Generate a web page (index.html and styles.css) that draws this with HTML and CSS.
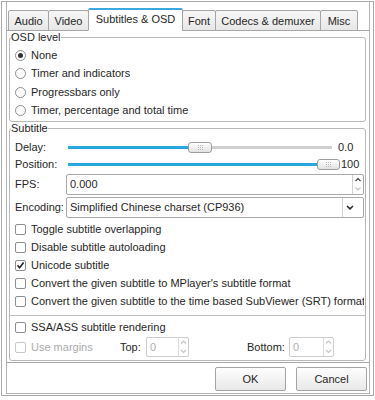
FILE: index.html
```html
<!DOCTYPE html>
<html>
<head>
<meta charset="utf-8">
<link rel="stylesheet" href="styles.css">
</head>
<body>
<div class="win">
  <div class="frame">
    <div class="tabs">
      <div class="tab w-audio">Audio</div>
      <div class="tab w-video">Video</div>
      <div class="tab sel w-sub">Subtitles &amp; OSD</div>
      <div class="tab w-font">Font</div>
      <div class="tab w-codec">Codecs &amp; demuxer</div>
      <div class="tab w-misc">Misc</div>
    </div>
    <div class="pane">
      <fieldset class="group osd">
        <legend>OSD level</legend>
        <div class="rows">
          <div class="opt"><span class="radio on"></span>None</div>
          <div class="opt"><span class="radio"></span>Timer and indicators</div>
          <div class="opt"><span class="radio"></span>Progressbars only</div>
          <div class="opt"><span class="radio"></span>Timer, percentage and total time</div>
        </div>
      </fieldset>
      <fieldset class="group sub">
        <legend>Subtitle</legend>
        <div class="subbody">
          <div class="srow delay">
            <span class="lbl">Delay:</span>
            <div class="slider"><span class="fill"></span><span class="handle"><svg width="5" height="5" viewBox="0 0 5 5"><path fill="#b8b8b8" d="M0 0h1v1H0zM2 0h1v1H2zM4 0h1v1H4zM0 2h1v1H0zM2 2h1v1H2zM4 2h1v1H4zM0 4h1v1H0zM2 4h1v1H2zM4 4h1v1H4z"/></svg></span><span class="rest"></span></div>
            <span class="val">0.0</span>
          </div>
          <div class="srow pos">
            <span class="lbl">Position:</span>
            <div class="slider"><span class="fill"></span><span class="handle"><svg width="5" height="5" viewBox="0 0 5 5"><path fill="#b8b8b8" d="M0 0h1v1H0zM2 0h1v1H2zM4 0h1v1H4zM0 2h1v1H0zM2 2h1v1H2zM4 2h1v1H4zM0 4h1v1H0zM2 4h1v1H2zM4 4h1v1H4z"/></svg></span><span class="rest"></span></div>
            <span class="val">100</span>
          </div>
          <div class="field fps">
            <span class="lbl">FPS:</span>
            <div class="box">
              <span class="txt">0.000</span>
              <span class="spin"><svg width="10" height="19" viewBox="0 0 10 19"><path d="M2.5 6 L5 3.5 L7.5 6" fill="none" stroke="#3a3a3a" stroke-width="1.1"/><path d="M2.5 12.5 L5 15 L7.5 12.5" fill="none" stroke="#c2c2c2" stroke-width="1.1"/></svg></span>
            </div>
          </div>
          <div class="field enc">
            <span class="lbl">Encoding:</span>
            <div class="box">
              <span class="txt">Simplified Chinese charset (CP936)</span>
              <span class="drop"><svg width="20" height="19" viewBox="0 0 20 19"><path d="M4 8 L7 10.8 L10 8" fill="none" stroke="#2a2a2a" stroke-width="1.6"/></svg></span>
            </div>
          </div>
          <div class="checks">
            <div class="chk"><span class="cb"></span>Toggle subtitle overlapping</div>
            <div class="chk"><span class="cb"></span>Disable subtitle autoloading</div>
            <div class="chk"><span class="cb"><svg width="9" height="9" viewBox="0 0 9 9"><path d="M1.5 4.3 L3.6 6.8 L7.6 1.4" fill="none" stroke="#222" stroke-width="1.6"/></svg></span>Unicode subtitle</div>
            <div class="chk"><span class="cb"></span>Convert the given subtitle to MPlayer's subtitle format</div>
            <div class="chk"><span class="cb"></span>Convert the given subtitle to the time based SubViewer (SRT) format</div>
          </div>
          <div class="sep"></div>
          <div class="chk ssa"><span class="cb"></span>SSA/ASS subtitle rendering</div>
          <div class="mrow">
            <div class="chk dis"><span class="cb dis"></span>Use margins</div>
            <span class="mlbl">Top:</span>
            <div class="sbox">
              <span class="txt">0</span>
              <span class="spin"><svg width="9" height="18" viewBox="0 0 9 18"><path d="M2 5.5 L4.5 3 L7 5.5" fill="none" stroke="#c4c4c4" stroke-width="1.1"/><path d="M2 12 L4.5 14.5 L7 12" fill="none" stroke="#c4c4c4" stroke-width="1.1"/></svg></span>
            </div>
            <span></span>
            <span class="mlbl">Bottom:</span>
            <div class="sbox">
              <span class="txt">0</span>
              <span class="spin"><svg width="9" height="18" viewBox="0 0 9 18"><path d="M2 5.5 L4.5 3 L7 5.5" fill="none" stroke="#c4c4c4" stroke-width="1.1"/><path d="M2 12 L4.5 14.5 L7 12" fill="none" stroke="#c4c4c4" stroke-width="1.1"/></svg></span>
            </div>
          </div>
        </div>
      </fieldset>
    </div>
    <div class="btns">
      <div class="btn">OK</div>
      <div class="btn">Cancel</div>
    </div>
  </div>
</div>
</body>
</html>
```
FILE: styles.css
```css
* { box-sizing: border-box; }
html, body { margin: 0; padding: 0; background: #fff; }
body {
  font-family: "Liberation Sans", Arial, sans-serif;
  font-size: 11px;
  line-height: 13px;
  color: #262626;
}
.win {
  margin: 1px 0 0 1px;
  width: 373px;
  border: 1px solid #a9a9a9;
  padding: 0 3px 1px 4px;
}
.frame {
  border: 1px solid #b3b3b3;
  border-top: none;
  padding-bottom: 2px;
}
.tabs {
  display: flex;
  align-items: flex-end;
  height: 29px;
  margin-bottom: -1px;
  padding-left: 1px;
  position: relative;
  z-index: 1;
}
.tab {
  height: 21px;
  border: 1px solid #a6a6a6;
  border-radius: 2px 2px 0 0;
  background: linear-gradient(#f7f7f7, #e7e7e7);
  display: flex;
  align-items: center;
  justify-content: center;
  margin-left: -1px;
  padding-top: 1px;
  white-space: nowrap;
  flex: none;
}
.tab:first-child { margin-left: 0; }
.tab.sel {
  height: 23px;
  background: #fff;
  border-top: 2px solid #3ba9df;
  border-bottom-color: #fff;
  padding-top: 0;
  padding-bottom: 2px;
}
.w-audio { width: 41px; }
.w-video { width: 41px; }
.w-sub { width: 95px; }
.w-font { width: 34px; }
.w-codec { width: 106px; }
.w-misc { width: 38px; }

.pane {
  border-top: 1px solid #a6a6a6;
  border-bottom: 1px solid #a6a6a6;
  padding: 0 3px 1px 2px;
}
fieldset.group {
  margin: 0;
  padding: 0;
  border: 1px solid #b8b8b8;
  border-radius: 3px;
  min-width: 0;
}
fieldset.group legend {
  padding: 0;
  margin-left: 1px;
  line-height: 13px;
}
.sub { margin-top: 6px; }

.rows { padding: 2px 0 1px 5px; }
.opt {
  height: 18.5px;
  display: flex;
  align-items: center;
}
.radio {
  width: 11px;
  height: 11px;
  border: 1px solid #8e8e8e;
  border-radius: 50%;
  margin-right: 5px;
  background: #fff;
  flex: none;
  display: flex;
  align-items: center;
  justify-content: center;
}
.radio.on::after {
  content: "";
  width: 5px;
  height: 5px;
  border-radius: 50%;
  background: #333;
}

.subbody { padding: 4px 1px 3px 5px; }
.srow { display: flex; align-items: center; }
.srow.delay { height: 17px; }
.srow.pos { height: 16px; }
.lbl { width: 51px; flex: none; }
.slider {
  flex: 1;
  display: flex;
  align-items: center;
  height: 11px;
}
.fill {
  flex: 1;
  height: 3px;
  background: #27a8de;
  margin-left: 2px;
}
.rest {
  flex: 1;
  height: 3px;
  background: #d0d0d0;
  margin-right: 2px;
}
.pos .rest { flex: 0 0 0; margin: 0; }
.handle {
  width: 24px;
  height: 11px;
  border: 1px solid #9d9d9d;
  border-radius: 3px;
  background: linear-gradient(#fefefe, #e2e2e2);
  display: flex;
  align-items: center;
  justify-content: center;
  flex: none;
}
.pos .handle { width: 23px; }
.val { flex: none; }
.delay .val { width: 26px; margin-left: 4px; }
.pos .val { width: 23px; margin-left: 1px; }

.field { display: flex; align-items: center; }
.fps { margin-top: 2px; }
.enc { margin-top: 2px; }
.box {
  flex: 1;
  height: 21px;
  border: 1px solid #a9a9a9;
  border-radius: 2px;
  display: flex;
  background: #fff;
}
.txt {
  flex: 1;
  padding-left: 3px;
  display: flex;
  align-items: center;
  white-space: nowrap;
}
.spin {
  width: 11px;
  border-left: 1px solid #d0d0d0;
  flex: none;
  display: flex;
}
.drop {
  width: 21px;
  border-left: 1px solid #d0d0d0;
  flex: none;
  display: flex;
}

.checks { margin-top: 2px; }
.chk {
  height: 18px;
  display: flex;
  align-items: center;
  white-space: nowrap;
  overflow: hidden;
}
.cb {
  width: 11px;
  height: 11px;
  border: 1px solid #8e8e8e;
  border-radius: 2px;
  margin-right: 5px;
  background: #fff;
  flex: none;
  display: flex;
}
.sep {
  margin: 5px -1px 0 -5px;
  border-top: 1px solid #bdbdbd;
}
.ssa { margin-top: 2px; }

.mrow {
  display: grid;
  grid-template-columns: 105px 26px 43px 58px 42px 45px;
  height: 20px;
  align-items: center;
  margin-top: 1px;
}
.mrow .chk { height: 20px; }
.dis { color: #ababab; }
.cb.dis { border-color: #c6c6c6; }
.sbox {
  height: 20px;
  border: 1px solid #cdcdcd;
  border-radius: 2px;
  display: flex;
  background: #fff;
}
.sbox .txt { color: #b0b0b0; }
.sbox .spin { width: 10px; border-left: 1px solid #dcdcdc; }

.btns {
  display: flex;
  justify-content: flex-end;
  gap: 10px;
  padding: 4px 2px 0 0;
}
.btn {
  width: 71px;
  height: 24px;
  border: 1px solid #a4a4a4;
  border-radius: 2px;
  background: linear-gradient(#fefefe, #e8e8e8);
  display: flex;
  align-items: center;
  justify-content: center;
}
```
